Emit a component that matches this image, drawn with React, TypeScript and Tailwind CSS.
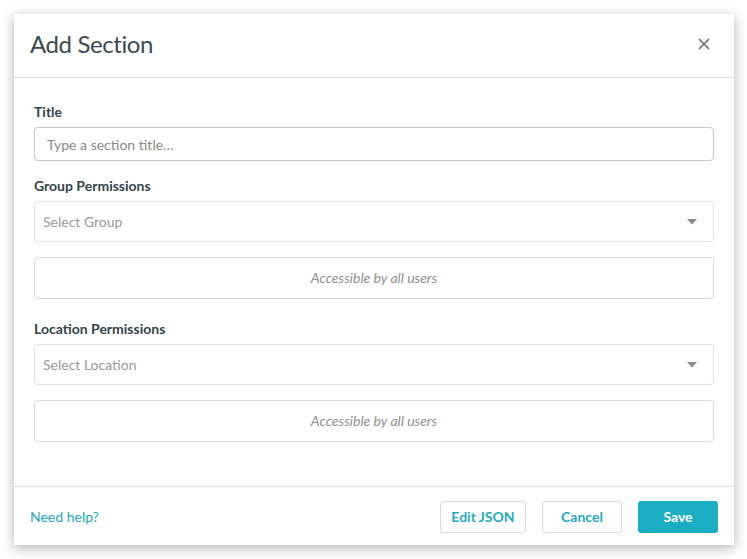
import { useState } from "react";

const Caret = () => (
  <svg width="10" height="6" viewBox="0 0 10 6" className="shrink-0">
    <path d="M0 0h10L5 5.5z" fill="#8a8a8a" />
  </svg>
);

const SelectBox = ({ placeholder }: { placeholder: string }) => (
  <div className="flex items-center justify-between h-[41px] border border-[#e2e2e2] rounded-[4px] pl-2 pr-4 bg-white">
    <span className="text-sm text-[#9a9a9a]">{placeholder}</span>
    <Caret />
  </div>
);

const AccessBox = () => (
  <div className="flex items-center justify-center h-[42px] border border-[#d9d9d9] rounded-[4px] mt-[15px]">
    <span className="text-sm italic text-[#8f8f8f]">Accessible by all users</span>
  </div>
);

const App = () => {
  const [title, setTitle] = useState("");

  return (
    <div
      className="w-[747px] h-[559px] bg-white pt-[14px] pl-[14px]"
      style={{ fontFamily: "Lato, 'Noto Sans', sans-serif" }}
    >
      <div className="w-[720px] h-[531px] bg-white flex flex-col shadow-[0_3px_12px_rgba(0,0,0,0.3)]">
        <div className="h-[64px] shrink-0 flex items-center justify-between px-4 pb-[3px] border-b border-[#dcdcdc]">
          <h1 className="text-[24px] text-[#3b4a50] tracking-[-0.4px]">Add Section</h1>
          <button className="w-6 h-6 flex items-center justify-center mr-[2px] text-[#6b6b6b]">
            <svg width="12" height="12" viewBox="0 0 12 12">
              <path d="M1 1l10 10M11 1L1 11" stroke="currentColor" strokeWidth="1.6" />
            </svg>
          </button>
        </div>

        <div className="flex-1 px-5 pt-6">
          <label className="block text-sm font-bold text-[#34444b] leading-5 mb-[5px]">Title</label>
          <input
            value={title}
            onChange={(e) => setTitle(e.target.value)}
            placeholder="Type a section title…"
            className="w-full h-[34px] border border-[#c6c6c6] rounded-[4px] px-3 text-sm text-[#333] placeholder:text-[#8a8a8a] outline-none"
          />

          <label className="block text-sm font-bold text-[#34444b] leading-5 mt-[15px] mb-[5px]">Group Permissions</label>
          <SelectBox placeholder="Select Group" />
          <AccessBox />

          <label className="block text-sm font-bold text-[#34444b] leading-5 mt-5 mb-[5px]">Location Permissions</label>
          <SelectBox placeholder="Select Location" />
          <AccessBox />
        </div>

        <div className="h-[59px] shrink-0 border-t border-[#dcdcdc] flex items-center justify-between px-4 pt-[2px]">
          <a href="#" className="text-sm text-[#22a9c0]">Need help?</a>
          <div className="flex gap-4">
            <button className="h-8 w-[86px] border border-[#dadada] rounded-[3px] text-sm font-bold text-[#1fa9c1]">Edit JSON</button>
            <button className="h-8 w-20 border border-[#dadada] rounded-[3px] text-sm font-bold text-[#1fa9c1]">Cancel</button>
            <button className="h-8 w-20 rounded-[3px] bg-[#1badc2] text-sm font-bold text-white">Save</button>
          </div>
        </div>
      </div>
    </div>
  );
};

export default App;
